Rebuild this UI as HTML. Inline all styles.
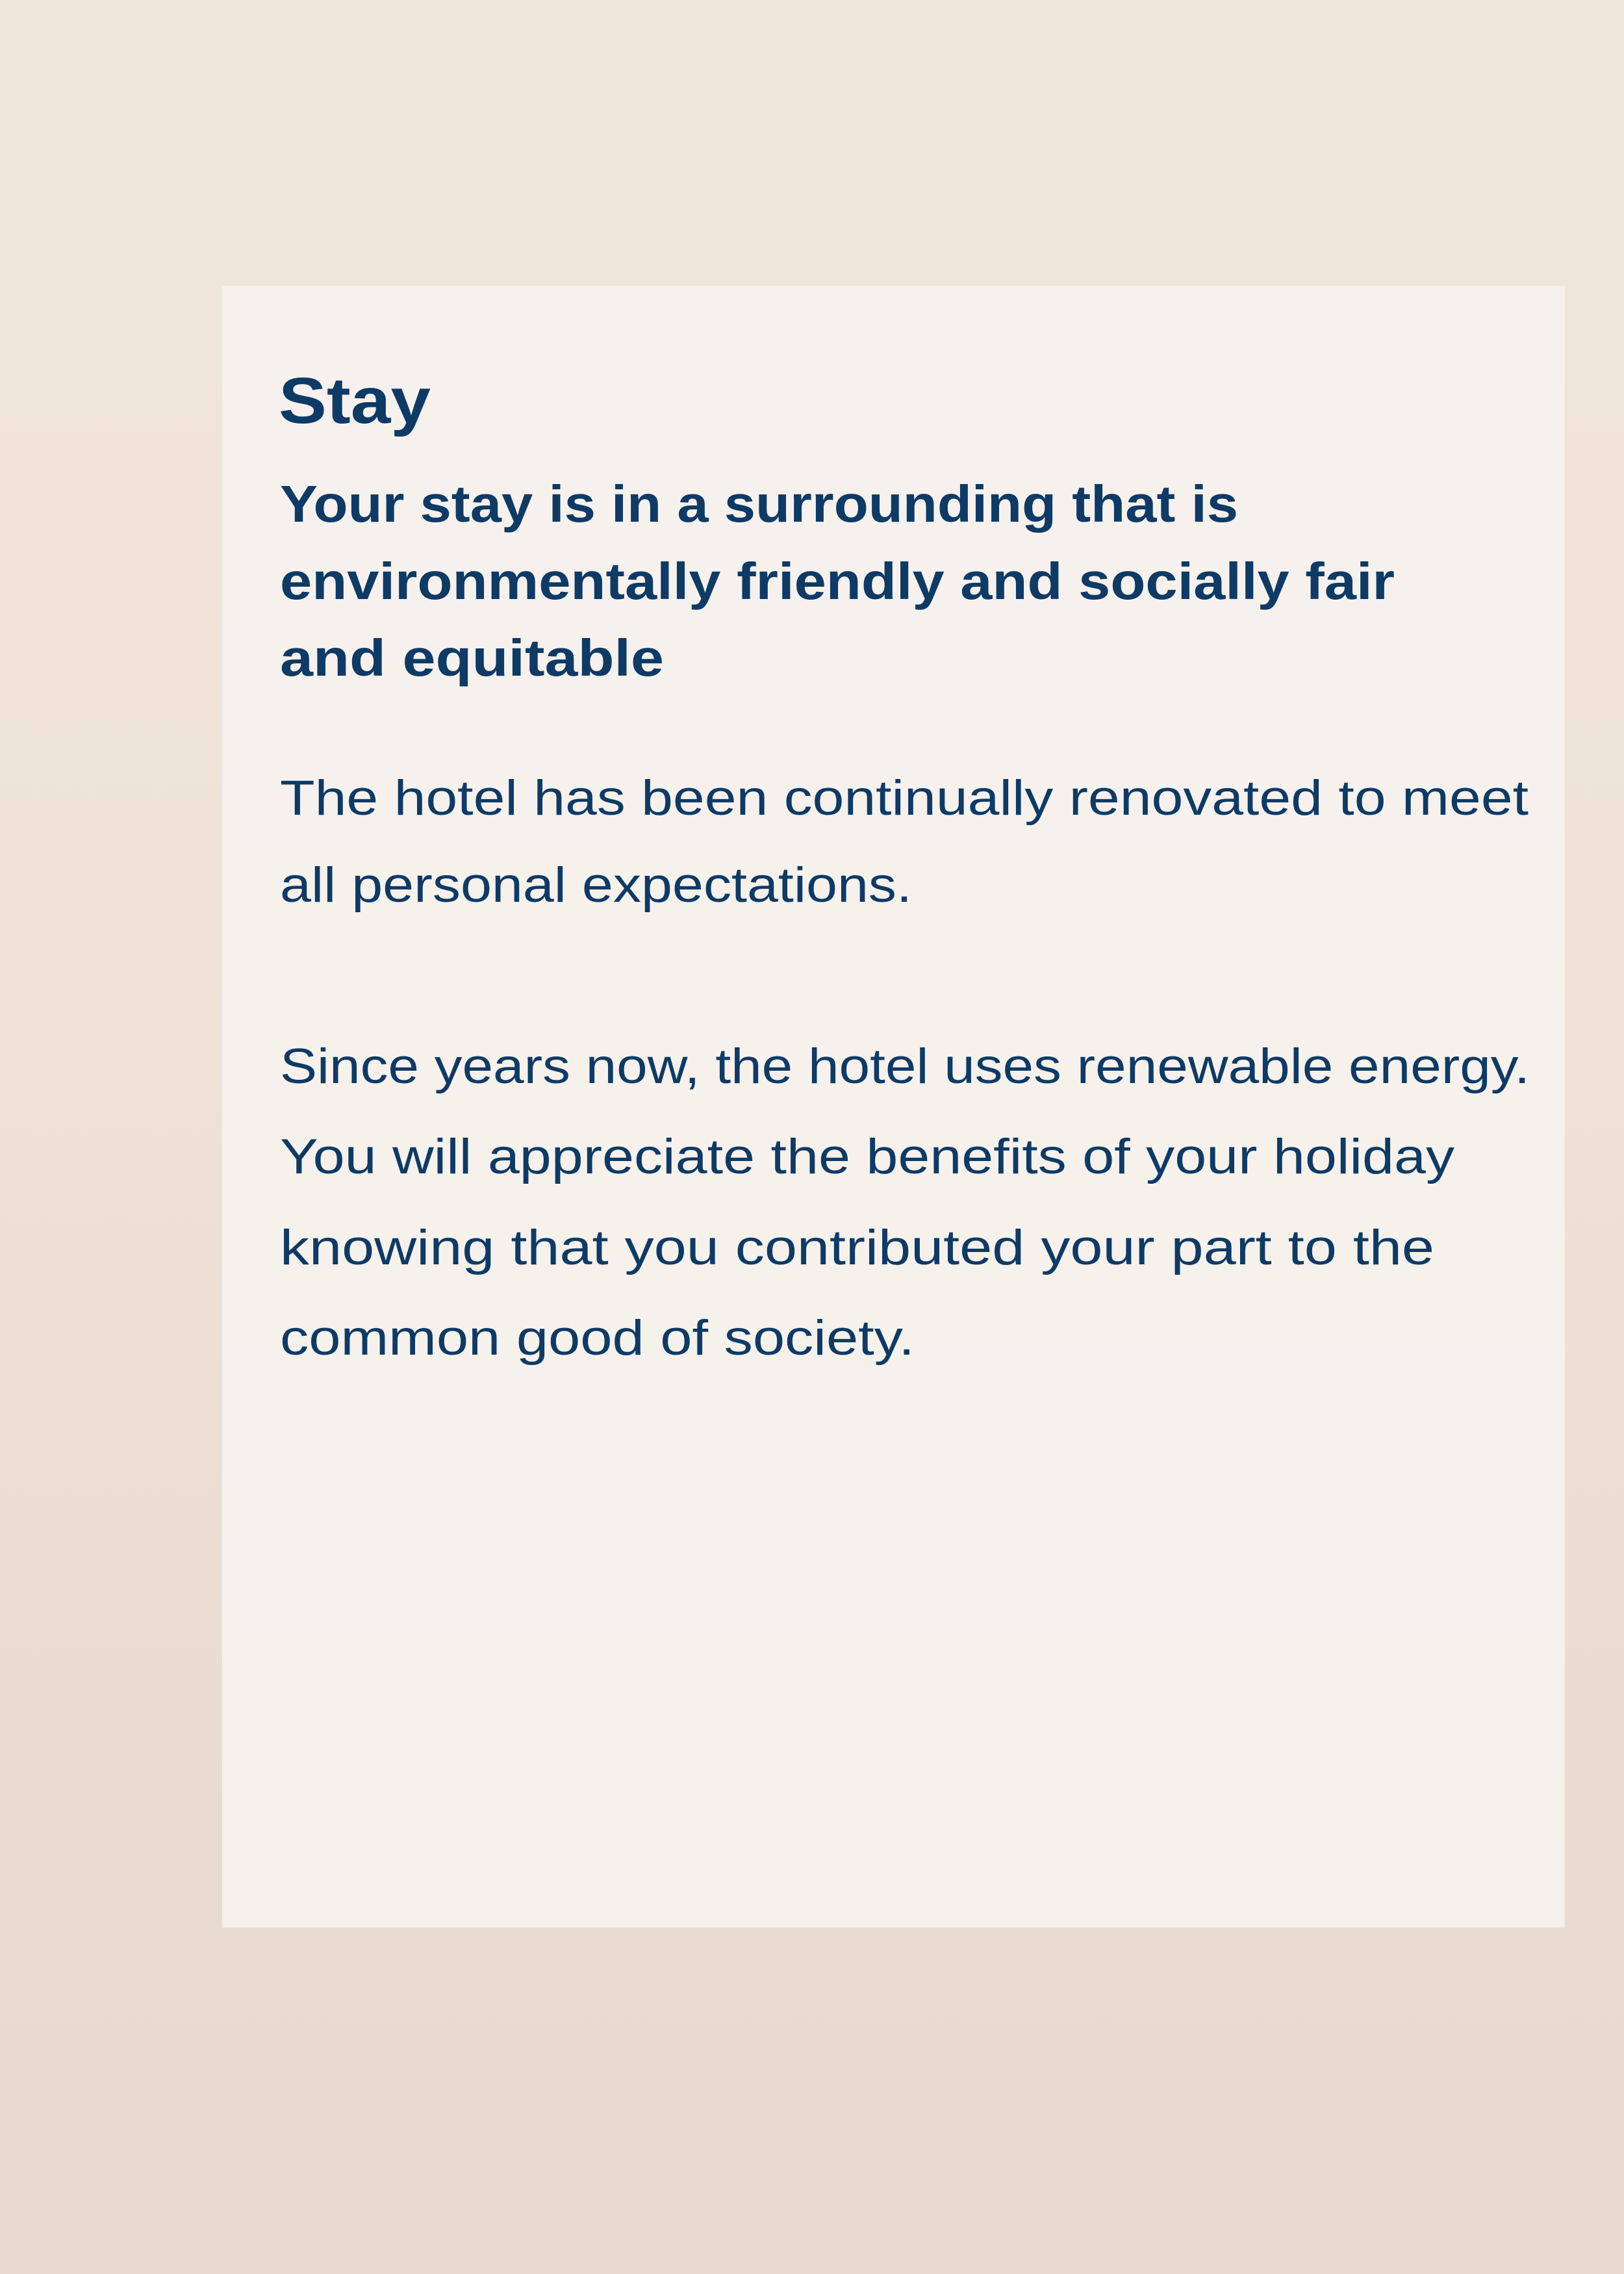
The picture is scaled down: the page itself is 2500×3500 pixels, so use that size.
<!DOCTYPE html>
<html><head><meta charset="utf-8"><style>
html,body{margin:0;padding:0;}
body{width:2500px;height:3500px;background:linear-gradient(180deg,#f1e6dc 0%,#efe3d8 40%,#e9ddd2 75%,#e6dacf 100%);position:relative;overflow:hidden;}
.panel{position:absolute;left:342px;top:440px;width:2067px;height:2527px;background:rgba(247,243,238,0.85);}
svg{position:absolute;left:0;top:0;}
text{fill:#0e3a66;font-family:"Liberation Sans",sans-serif;}
.h{font-weight:bold;font-size:100px;}
.s{font-weight:bold;font-size:80px;}
.b{font-size:76px;}
</style></head><body>
<div class="panel"></div>
<svg width="2500" height="3500">
<text class="h" x="429" y="651" textLength="234" lengthAdjust="spacingAndGlyphs">Stay</text>
<text class="s" x="431" y="803" textLength="1475" lengthAdjust="spacingAndGlyphs">Your stay is in a surrounding that is</text>
<text class="s" x="431" y="922" textLength="1716" lengthAdjust="spacingAndGlyphs">environmentally friendly and socially fair</text>
<text class="s" x="431" y="1040" textLength="591" lengthAdjust="spacingAndGlyphs">and equitable</text>
<text class="b" x="431" y="1254" textLength="1922" lengthAdjust="spacingAndGlyphs">The hotel has been continually renovated to meet</text>
<text class="b" x="431" y="1388" textLength="973" lengthAdjust="spacingAndGlyphs">all personal expectations.</text>
<text class="b" x="431" y="1667" textLength="1924" lengthAdjust="spacingAndGlyphs">Since years now, the hotel uses renewable energy.</text>
<text class="b" x="431" y="1806" textLength="1808" lengthAdjust="spacingAndGlyphs">You will appreciate the benefits of your holiday</text>
<text class="b" x="431" y="1946" textLength="1777" lengthAdjust="spacingAndGlyphs">knowing that you contributed your part to the</text>
<text class="b" x="431" y="2085" textLength="977" lengthAdjust="spacingAndGlyphs">common good of society.</text>
</svg>
</body></html>
